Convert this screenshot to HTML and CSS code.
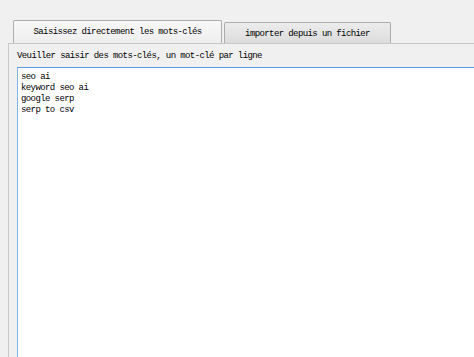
FILE: index.html
```html
<!DOCTYPE html>
<html lang="fr">
<head>
    <meta charset="UTF-8">
    <title>Mots-clés</title>
    <link rel="stylesheet" href="styles.css">
</head>
<body>
    <div class="tabs">
        <div class="tab active">Saisissez directement les mots-clés</div>
        <div class="tab">importer depuis un fichier</div>
    </div>
    <div class="pane">
        <label for="keywords">Veuiller saisir des mots-clés, un mot-clé par ligne</label>
        <textarea id="keywords">seo ai
keyword seo ai
google serp
serp to csv</textarea>
    </div>
</body>
</html>
```

FILE: styles.css
```css
html, body {
    margin: 0;
    padding: 0;
    overflow: hidden;
}
body {
    background-color: #f0f0f0;
    font-family: "Liberation Mono", "DejaVu Sans Mono", monospace;
    font-size: 9px;
    letter-spacing: -0.6px;
    color: #000;
    padding: 20px 0 0 8px;
    height: 357px;
    box-sizing: border-box;
    display: flex;
    flex-direction: column;
}
.tabs {
    display: flex;
    align-items: flex-end;
    gap: 2px;
    margin-left: 5px;
    height: 23px;
    flex: none;
}
.tab {
    box-sizing: border-box;
    height: 21px;
    width: 167px;
    border: 1px solid #acacac;
    border-bottom: none;
    border-radius: 2px 2px 0 0;
    background: linear-gradient(#ececec, #dcdcdc);
    display: flex;
    align-items: center;
    justify-content: center;
    padding-top: 1px;
}
.tab.active {
    height: 23px;
    width: 209px;
    background: linear-gradient(#f8f8f8, #ededed);
    padding-top: 0;
}
.pane {
    flex: 1;
    min-height: 0;
    display: flex;
    flex-direction: column;
    border-top: 1px solid #c8c8c8;
    border-left: 1px solid #c8c8c8;
    padding: 6px 0 0 8px;
}
label {
    display: block;
    line-height: 13px;
    margin-bottom: 4px;
}
textarea {
    flex: 1;
    min-height: 0;
    display: block;
    box-sizing: border-box;
    width: 100%;
    margin: 0;
    padding: 4px 3px;
    border: 1px solid #7eb4ea;
    border-top-color: #569de5;
    border-right: none;
    border-bottom: none;
    background: #fff;
    font-family: inherit;
    font-size: 9px;
    letter-spacing: -0.6px;
    line-height: 11px;
    color: #000;
    resize: none;
    outline: none;
    overflow: hidden;
}
```
